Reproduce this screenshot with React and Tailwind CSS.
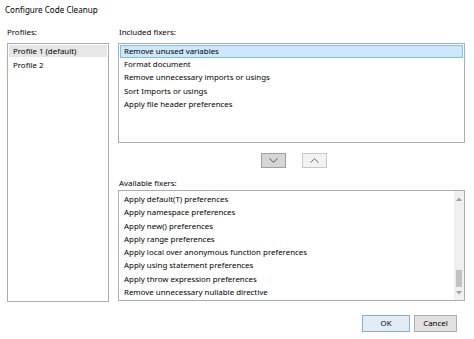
import React from "react";

const included = [
  "Remove unused variables",
  "Format document",
  "Remove unnecessary imports or usings",
  "Sort Imports or usings",
  "Apply file header preferences",
];

const available = [
  "Apply default(T) preferences",
  "Apply namespace preferences",
  "Apply new() preferences",
  "Apply range preferences",
  "Apply local over anonymous function preferences",
  "Apply using statement preferences",
  "Apply throw expression preferences",
  "Remove unnecessary nullable directive",
];

export default function App() {
  return (
    <div
      className="relative w-[474px] h-[339px] bg-white text-[#000000] text-[7.9px] overflow-hidden"
      style={{ fontFamily: '"Noto Sans", "Open Sans", sans-serif' }}
    >
      <div className="pl-[5px] pt-[3px] h-[22px] leading-[13px] text-[8.1px]">Configure Code Cleanup</div>
      <div className="flex pl-[7px] pt-[4px]">
        {/* Profiles column */}
        <div className="flex flex-col w-[102px]">
          <div className="h-[17px] leading-[13px]">Profiles:</div>
          <div className="h-[259px] border border-[#abadb3] p-[1px]">
            <div className="h-[12px] leading-[12px] bg-[#e6e6e6] pl-[4px]">Profile 1 (default)</div>
            <div className="h-[13px] leading-[14px] pl-[4px] mt-[1px]">Profile 2</div>
          </div>
        </div>
        {/* Fixers column */}
        <div className="flex flex-col ml-[9px] w-[347px]">
          <div className="h-[17px] leading-[13px] pl-[1px]">Included fixers:</div>
          <div className="h-[100px] border border-[#abadb3] p-[1px]">
            {included.map((t, i) => (
              <div
                key={t}
                className={
                  i === 0
                    ? "h-[13px] leading-[11px] border border-[#7ac0f5] bg-[#cde8fb] pl-[3px]"
                    : "h-[13.3px] leading-[13.3px] pl-[4px]"
                }
              >
                {t}
              </div>
            ))}
          </div>
          <div className="flex justify-center gap-[16px] mt-[10px] h-[15px] pl-[4px]">
            <div className="w-[25px] h-[15px] border border-[#a0a0a0] bg-[#d6d6d6] flex items-center justify-center">
              <svg width="9" height="5" viewBox="0 0 9 5">
                <path d="M0.5 0.5 L4.5 4.2 L8.5 0.5" fill="none" stroke="#444" strokeWidth="0.9" />
              </svg>
            </div>
            <div className="w-[25px] h-[15px] border border-[#c8c8c8] bg-[#f2f2f2] flex items-center justify-center">
              <svg width="9" height="5" viewBox="0 0 9 5">
                <path d="M0.5 4.5 L4.5 0.8 L8.5 4.5" fill="none" stroke="#555" strokeWidth="0.9" />
              </svg>
            </div>
          </div>
          <div className="h-[22px] pt-[9px] leading-[13px] pl-[1px]">Available fixers:</div>
          <div className="h-[111px] border border-[#abadb3] flex">
            <div className="flex-1 pt-[2px]">
              {available.map((t) => (
                <div key={t} className="h-[13.3px] leading-[13.3px] pl-[5px]">
                  {t}
                </div>
              ))}
            </div>
            <div className="w-[10px] bg-[#f0f0f0] flex flex-col items-center">
              <svg width="6" height="4" viewBox="0 0 6 4" className="mt-[6px]">
                <path d="M0 4 L3 0.5 L6 4 Z" fill="#a0a0a0" />
              </svg>
              <div className="flex-1" />
              <div className="w-[6px] h-[17px] bg-[#c2c2c2]" />
              <svg width="6" height="4" viewBox="0 0 6 4" className="mt-[4px] mb-[5px]">
                <path d="M0 0 L3 3.5 L6 0 Z" fill="#a0a0a0" />
              </svg>
            </div>
          </div>
        </div>
      </div>
      <div className="flex justify-end gap-[4px] pr-[17px] mt-[13px]">
        <div className="w-[48px] h-[17px] border border-[#7fb0d9] bg-[#e1ecf5] flex items-center justify-center">
          OK
        </div>
        <div className="w-[43px] h-[17px] border border-[#adadad] bg-[#e1e1e1] flex items-center justify-center">
          Cancel
        </div>
      </div>
    </div>
  );
}
